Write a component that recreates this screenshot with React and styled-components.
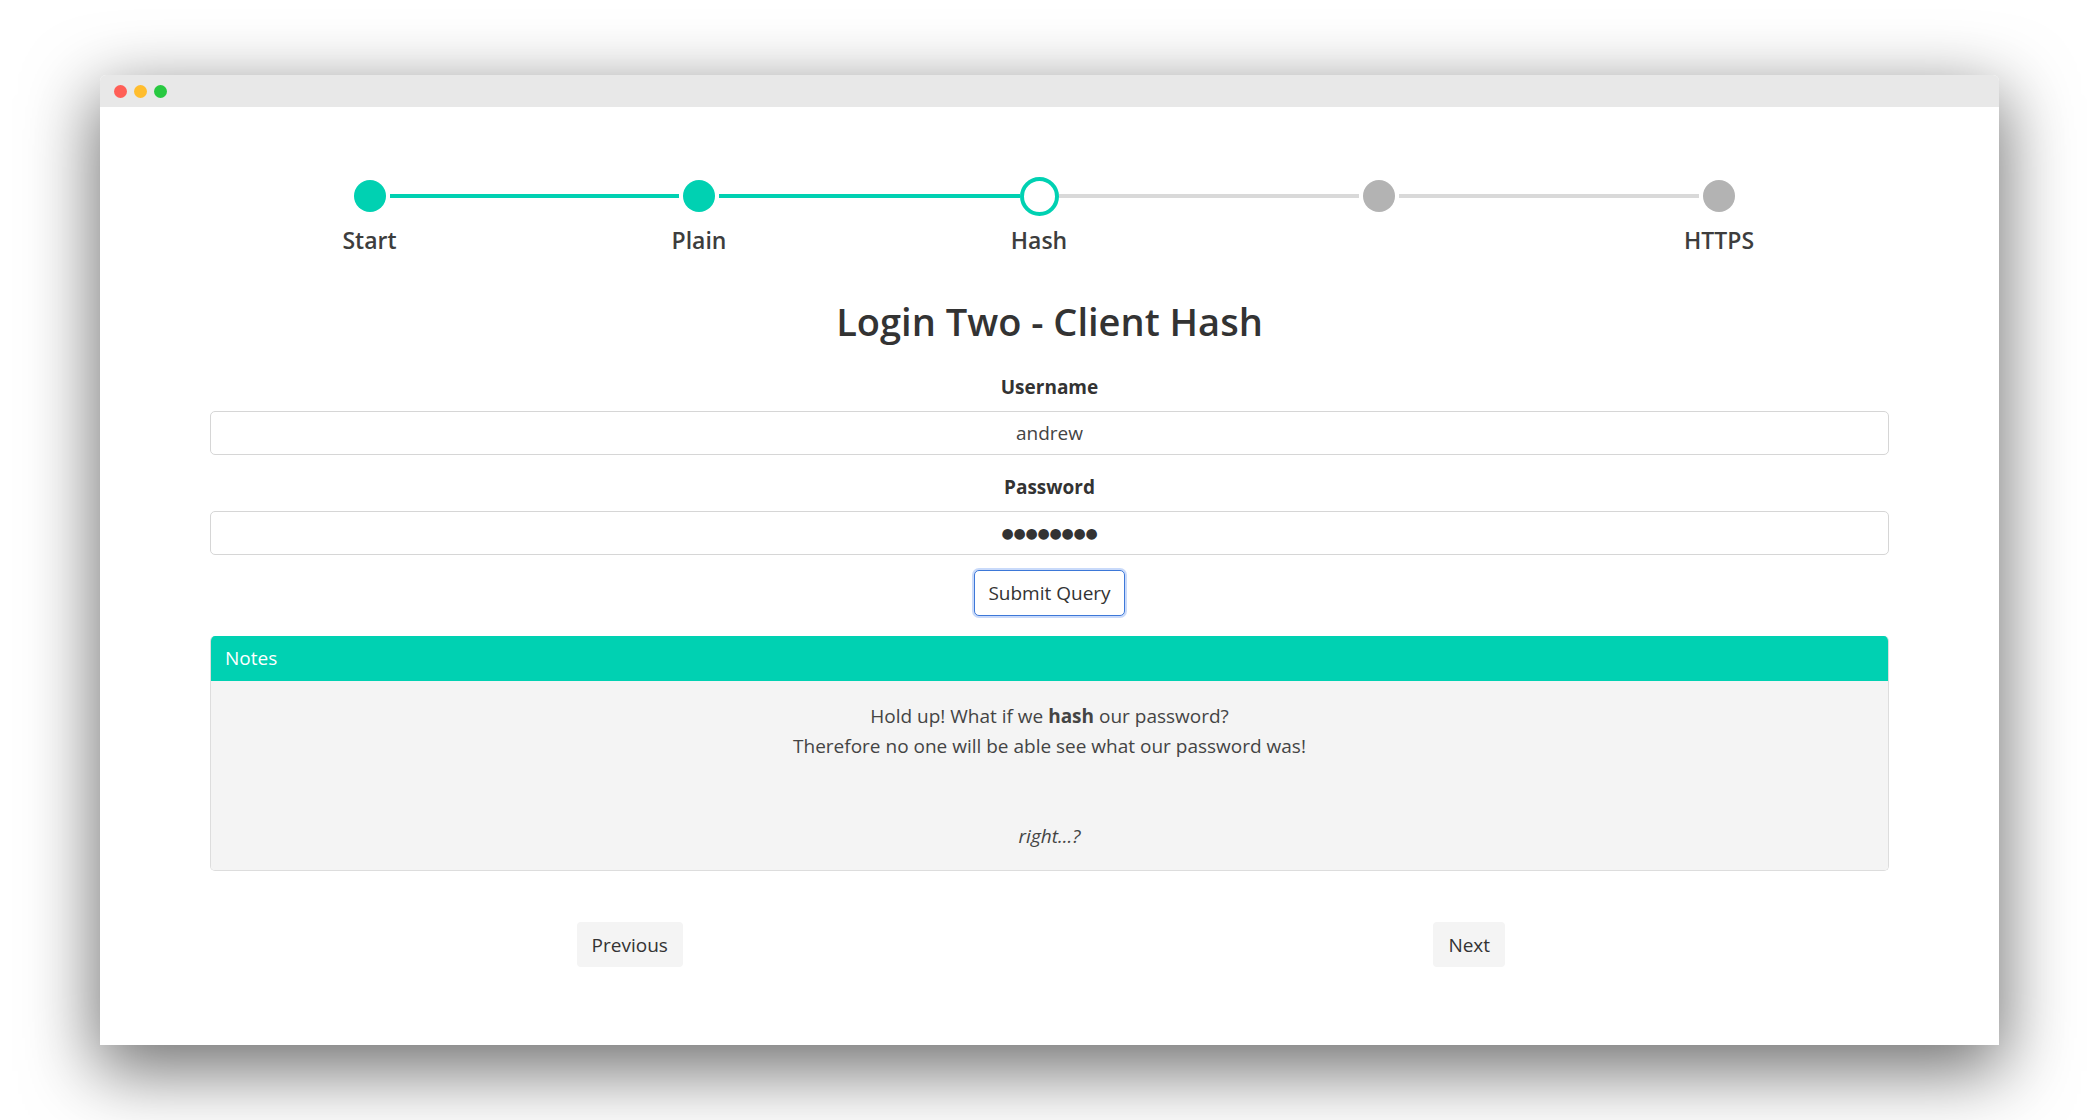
import React from 'react';
import styled, { createGlobalStyle } from 'styled-components';

const TEAL = '#00d1b2';

const GlobalStyle = createGlobalStyle`
    html, body {
        margin: 0;
        padding: 0;
        background: #ffffff;
    }
    body {
        font-family: "Open Sans", "Noto Sans", "Liberation Sans", sans-serif;
        color: #444444;
    }
    * {
        box-sizing: border-box;
    }
`

const Page = styled.div`
    width: 2099px;
    height: 1120px;
    padding: 75px 100px 0 100px;
    overflow: hidden;
`

const Window = styled.div`
    width: 1899px;
    height: 970px;
    border-radius: 6px 6px 0 0;
    background: #ffffff;
    box-shadow: 0 22px 70px 4px rgba(0, 0, 0, 0.56);
    display: flex;
    flex-direction: column;
`

const TitleBar = styled.div`
    height: 32px;
    flex: none;
    background: #e8e8e8;
    border-radius: 6px 6px 0 0;
    display: flex;
    align-items: center;
    gap: 7px;
    padding-left: 14px;
`

const Light = styled.span`
    width: 13px;
    height: 13px;
    border-radius: 50%;
    background: ${props => props.$color};
`

const Content = styled.div`
    flex: 1;
    padding-top: 69px;
`

const Container = styled.div`
    width: 1679px;
    margin: 0 auto;
`

const Stepper = styled.div`
    display: grid;
    grid-template-columns: 319px repeat(4, 340px);
`

const Step = styled.div`
    display: flex;
    flex-direction: column;
    align-items: center;
`

const Track = styled.div`
    width: 100%;
    height: 40px;
    display: flex;
    align-items: center;
`

const Connector = styled.div`
    flex: 1;
    height: 4px;
    background: ${props => props.$off ? 'transparent' : props.$done ? TEAL : '#d9d9d9'};
`

const Dot = styled.div`
    flex: none;
    width: ${props => props.$active ? '39px' : '32px'};
    height: ${props => props.$active ? '39px' : '32px'};
    margin: ${props => props.$active ? '0' : '0 4px'};
    border-radius: 50%;
    background: ${props => props.$active ? '#ffffff' : props.$done ? TEAL : '#b3b3b3'};
    border: ${props => props.$active ? `4px solid ${TEAL}` : 'none'};
`

const StepLabel = styled.div`
    margin-top: 7px;
    height: 34px;
    font-size: 23px;
    line-height: 34px;
    font-weight: 600;
    color: #3d3d3d;
`

const Title = styled.h2`
    margin: 40px 0 27px 0;
    text-align: center;
    font-size: 38px;
    line-height: 48px;
    font-weight: 600;
    color: #333333;
`

const Form = styled.form`
    display: flex;
    flex-direction: column;
    align-items: center;
`

const FieldLabel = styled.label`
    display: block;
    margin: ${props => props.$first ? '0' : '17px'} 0 9px 0;
    font-size: 19px;
    line-height: 30px;
    font-weight: 700;
    color: #333333;
`

const TextInput = styled.input`
    width: 100%;
    height: 44px;
    border: 1px solid #d6d6d6;
    border-radius: 5px;
    background: #ffffff;
    text-align: center;
    font-family: inherit;
    font-size: 19px;
    color: #444444;
    outline: none;
`

const MaskedInput = styled(TextInput)`
    font-family: "DejaVu Sans", sans-serif;
    font-size: 14px;
    color: #333333;
    letter-spacing: -0.2px;
`

const SubmitButton = styled.button`
    margin-top: 15px;
    height: 46px;
    padding: 0 13px;
    border: 1px solid #3d78d8;
    border-radius: 5px;
    background: #ffffff;
    box-shadow: 0 0 0 2px #c9dafa;
    font-family: inherit;
    font-size: 19px;
    color: #333333;
`

const Card = styled.div`
    margin-top: 20px;
    border-radius: 5px;
    overflow: hidden;
    border: 1px solid #dddddd;
    border-top: none;
`

const CardHeader = styled.div`
    height: 45px;
    background: ${TEAL};
    color: #ffffff;
    font-size: 19px;
    line-height: 45px;
    padding-left: 14px;
`

const CardBody = styled.div`
    background: #f4f4f4;
    padding: 20px 20px 19px 20px;
    text-align: center;
    font-size: 19px;
    line-height: 30px;
    color: #444444;
`

const Note = styled.p`
    margin: 0 0 ${props => props.$spaced ? '60px' : '0'} 0;
    font-style: ${props => props.$italic ? 'italic' : 'normal'};
`

const Nav = styled.div`
    margin-top: 51px;
    display: flex;
`

const NavCell = styled.div`
    flex: 1;
    display: flex;
    justify-content: center;
`

const NavButton = styled.button`
    height: 45px;
    padding: 0 15px;
    border: none;
    border-radius: 4px;
    background: #f4f4f4;
    font-family: inherit;
    font-size: 19px;
    color: #333333;
`

const steps = [
    { label: 'Start', state: 'done' },
    { label: 'Plain', state: 'done' },
    { label: 'Hash', state: 'active' },
    { label: '', state: 'todo' },
    { label: 'HTTPS', state: 'todo' },
];

function App() {
    return (
        <>
        <GlobalStyle />
        <Page>
            <Window>
                <TitleBar>
                    <Light $color="#ff5f57" />
                    <Light $color="#ffbd2e" />
                    <Light $color="#28c941" />
                </TitleBar>
                <Content>
                    <Container>
                        <Stepper>
                            {steps.map((step, i) => (
                                <Step key={i}>
                                    <Track>
                                        <Connector
                                            $off={i === 0}
                                            $done={step.state !== 'todo'}
                                        />
                                        <Dot
                                            $active={step.state === 'active'}
                                            $done={step.state === 'done'}
                                        />
                                        <Connector
                                            $off={i === steps.length - 1}
                                            $done={step.state === 'done'}
                                        />
                                    </Track>
                                    <StepLabel>{step.label}</StepLabel>
                                </Step>
                            ))}
                        </Stepper>
                        <Title>Login Two - Client Hash</Title>
                        <Form onSubmit={(e) => e.preventDefault()}>
                            <FieldLabel $first>Username</FieldLabel>
                            <TextInput type="text" defaultValue="andrew" readOnly />
                            <FieldLabel>Password</FieldLabel>
                            <MaskedInput type="text" defaultValue="●●●●●●●●" readOnly />
                            <SubmitButton type="submit">Submit Query</SubmitButton>
                        </Form>
                        <Card>
                            <CardHeader>Notes</CardHeader>
                            <CardBody>
                                <Note>Hold up! What if we <b>hash</b> our password?</Note>
                                <Note $spaced>Therefore no one will be able see what our password was!</Note>
                                <Note $italic>right...?</Note>
                            </CardBody>
                        </Card>
                        <Nav>
                            <NavCell>
                                <NavButton>Previous</NavButton>
                            </NavCell>
                            <NavCell>
                                <NavButton>Next</NavButton>
                            </NavCell>
                        </Nav>
                    </Container>
                </Content>
            </Window>
        </Page>
        </>
    )
}

export default App;
